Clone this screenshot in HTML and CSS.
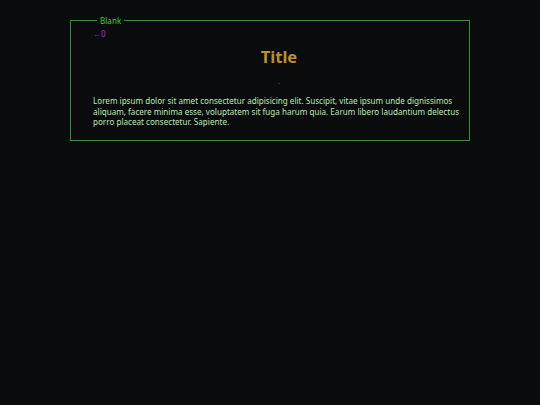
FILE: index.html
```html
<!DOCTYPE html>
<html>
<head>
<meta charset="utf-8">
<link rel="stylesheet" href="styles.css">
</head>
<body>
<div class="wrap">
  <fieldset class="box">
    <legend class="legend">Blank</legend>
    <div class="back">←0</div>
    <h1 class="title">Title</h1>
    <div class="dot">.</div>
    <p class="text">Lorem ipsum dolor sit amet consectetur adipisicing elit. Suscipit, vitae ipsum unde dignissimos aliquam, facere minima esse, voluptatem sit fuga harum quia. Earum libero laudantium delectus porro placeat consectetur. Sapiente.</p>
  </fieldset>
</div>
</body>
</html>
```
FILE: styles.css
```css
html, body {
  margin: 0;
  padding: 0;
  background: #0a0b0d;
  font-family: "Noto Sans", sans-serif;
}
.wrap {
  width: 400px;
  margin: 0 auto;
  padding-top: 15px;
}
.box {
  margin: 0;
  border: 1px solid #3f8a45;
  padding: 3px 4px 12px 22px;
}
.legend {
  color: #33cc44;
  font-size: 8.1px;
  padding: 0 3px;
  margin-left: 4px;
}
.back {
  color: #b828c8;
  font-size: 8.1px;
  line-height: 10px;
}
.title {
  margin: 7px 0 0;
  text-align: center;
  color: #c09020;
  font-size: 16.5px;
  font-weight: bold;
  line-height: 22px;
}
.dot {
  text-align: center;
  color: #888;
  font-size: 6px;
  line-height: 8px;
  margin-top: 10px;
}
.text {
  margin: 10px 0 0;
  color: #b8e8b0;
  font-size: 8.1px;
  line-height: 10.7px;
}
```
